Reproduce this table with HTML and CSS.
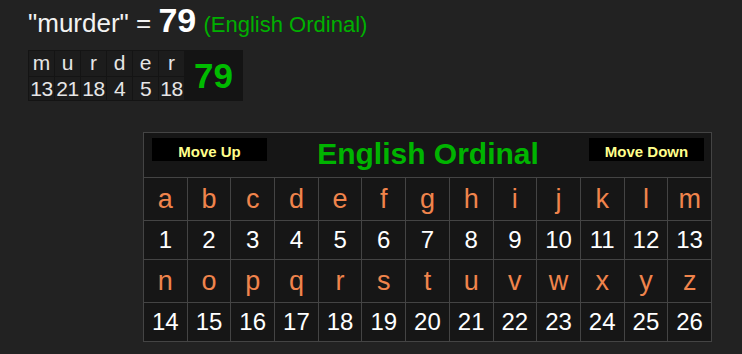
FILE: index.html
```html
<!DOCTYPE html>
<html>
<head>
<meta charset="utf-8">
<link rel="stylesheet" href="styles.css">
</head>
<body>
<div class="page">
  <div class="title">
    <span class="word">"murder" = </span><span class="total">79</span> <span class="cipher">(English Ordinal)</span>
  </div>
  <div class="breakdown">
    <div class="bl">m</div><div class="bl">u</div><div class="bl">r</div><div class="bl">d</div><div class="bl">e</div><div class="bl">r</div>
    <div class="bsum">79</div>
    <div class="bn">13</div><div class="bn">21</div><div class="bn">18</div><div class="bn">4</div><div class="bn">5</div><div class="bn">18</div>
  </div>
  <table class="chart">
    <tr class="head">
      <td colspan="13">
        <div class="headbar">
          <div class="btn">Move Up</div>
          <div class="ctitle">English Ordinal</div>
          <div class="btn">Move Down</div>
        </div>
      </td>
    </tr>
    <tr class="letters"><td>a</td><td>b</td><td>c</td><td>d</td><td>e</td><td>f</td><td>g</td><td>h</td><td>i</td><td>j</td><td>k</td><td>l</td><td>m</td></tr>
    <tr class="nums"><td>1</td><td>2</td><td>3</td><td>4</td><td>5</td><td>6</td><td>7</td><td>8</td><td>9</td><td>10</td><td>11</td><td>12</td><td>13</td></tr>
    <tr class="letters"><td>n</td><td>o</td><td>p</td><td>q</td><td>r</td><td>s</td><td>t</td><td>u</td><td>v</td><td>w</td><td>x</td><td>y</td><td>z</td></tr>
    <tr class="nums"><td>14</td><td>15</td><td>16</td><td>17</td><td>18</td><td>19</td><td>20</td><td>21</td><td>22</td><td>23</td><td>24</td><td>25</td><td>26</td></tr>
  </table>
</div>
</body>
</html>
```

FILE: styles.css
```css
html, body {
  margin: 0;
  padding: 0;
  background: #222222;
}
.page {
  font-family: "Liberation Sans", Arial, sans-serif;
  width: 742px;
  height: 354px;
  overflow: hidden;
}
.title {
  height: 50px;
  box-sizing: border-box;
  padding: 4px 0 0 28px;
  font-size: 26px;
  line-height: 32px;
  color: #ffffff;
  white-space: nowrap;
}
.word {
  color: #f2f2f2;
}
.total {
  font-size: 34px;
  font-weight: bold;
  color: #ffffff;
}
.cipher {
  font-size: 22px;
  color: #00b000;
}
.breakdown {
  margin-left: 28px;
  display: grid;
  grid-template-columns: repeat(6, 25px) 57px;
  grid-template-rows: 25px 23px;
  gap: 1px;
  padding: 1px;
  width: max-content;
  background: #141414;
}
.bl, .bn {
  background: #1c1c1c;
  color: #e6e6e6;
  text-align: center;
  font-size: 21px;
  white-space: nowrap;
}
.bl {
  line-height: 23px;
}
.bn {
  line-height: 24px;
  letter-spacing: -0.5px;
}
.bsum {
  grid-column: 7;
  grid-row: 1 / span 2;
  display: flex;
  align-items: center;
  justify-content: center;
  color: #00bb00;
  font-size: 35px;
  font-weight: bold;
}
.chart {
  margin: 31px 0 0 143px;
  width: 569px;
  border-collapse: collapse;
  table-layout: fixed;
  background: #161616;
}
.chart td {
  border: 1px solid #444444;
  text-align: center;
  vertical-align: middle;
  padding: 0;
}
.head {
  height: 45px;
}
.head td {
  vertical-align: top;
}
.headbar {
  display: flex;
  justify-content: space-between;
  align-items: flex-start;
  padding: 5px 7px 0 8px;
}
.btn {
  width: 115px;
  height: 23px;
  box-sizing: border-box;
  padding-top: 6px;
  background: #000000;
  color: #ffff8c;
  font-size: 15px;
  font-weight: bold;
  line-height: 16px;
  text-align: center;
}
.ctitle {
  color: #00b400;
  font-size: 30px;
  font-weight: bold;
  line-height: 34px;
  margin-top: -1px;
}
.letters {
  height: 43px;
}
.letters td {
  color: #f0844c;
  font-size: 27px;
  line-height: 30px;
}
.nums {
  height: 39px;
}
.nums td {
  color: #ffffff;
  font-size: 24px;
  line-height: 26px;
}
```
